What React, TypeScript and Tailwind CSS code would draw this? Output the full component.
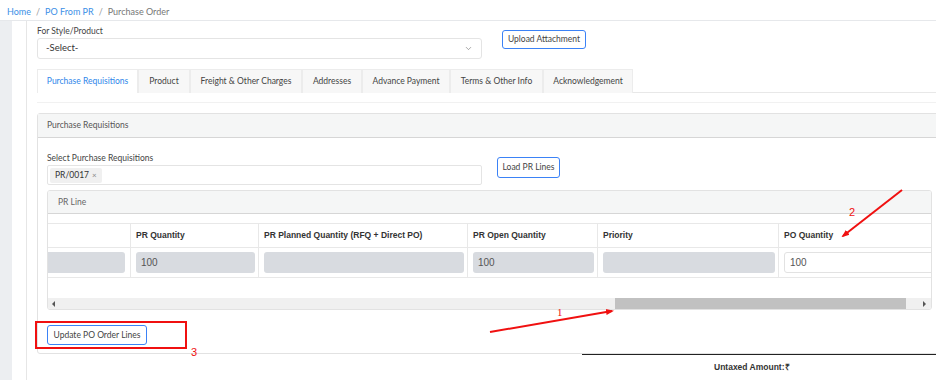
import { ChevronDown } from "lucide-react";

const tabs = [
  { label: "Purchase Requisitions", w: "w-[101px]", active: true },
  { label: "Product", w: "w-[52px]" },
  { label: "Freight & Other Charges", w: "w-[112px]" },
  { label: "Addresses", w: "w-[60px]" },
  { label: "Advance Payment", w: "w-[88px]" },
  { label: "Terms & Other Info", w: "w-[93px]" },
  { label: "Acknowledgement", w: "w-[90px]" },
];

const columns = [
  { head: "", w: "w-[83px]", value: "", editable: false },
  { head: "PR Quantity", w: "w-[128px]", value: "100", editable: false },
  { head: "PR Planned Quantity (RFQ + Direct PO)", w: "w-[209px]", value: "", editable: false },
  { head: "PR Open Quantity", w: "w-[130px]", value: "100", editable: false },
  { head: "Priority", w: "w-[181px]", value: "", editable: false },
  { head: "PO Quantity", w: "w-[170px]", value: "100", editable: true },
];

const Annotations = () => (
  <svg className="absolute inset-0 pointer-events-none" width="936" height="380">
    <defs>
      <marker id="head" markerWidth="8" markerHeight="8" refX="6" refY="4" orient="auto" markerUnits="userSpaceOnUse">
        <path d="M0 1 L8 4 L0 7 Z" fill="#f01010" />
      </marker>
    </defs>
    <line x1="490" y1="332" x2="612" y2="311" stroke="#f01010" strokeWidth="2" markerEnd="url(#head)" />
    <line x1="902" y1="190" x2="843" y2="236" stroke="#f01010" strokeWidth="2" markerEnd="url(#head)" />
    <rect x="36" y="322" width="150" height="26" fill="none" stroke="#f01010" strokeWidth="2" />
    <text x="557" y="316" fill="#f01010" fontSize="11" fontFamily="'Liberation Serif', serif">1</text>
    <text x="849" y="216" fill="#f01010" fontSize="11" fontFamily="'Liberation Sans', sans-serif">2</text>
    <text x="191" y="356" fill="#f01010" fontSize="11" fontFamily="'Liberation Sans', sans-serif">3</text>
  </svg>
);

export default function App() {
  return (
    <div className="relative w-[936px] h-[380px] overflow-hidden bg-white text-[#333] font-['Lato','Open_Sans',sans-serif]">
      {/* breadcrumb */}
      <div className="h-[21px] border-b border-[#e6e8eb] flex items-start pt-[7px] pl-[7px] text-[9px] leading-[10px] gap-[5px]">
        <span className="text-[#3b8fe6]">Home</span>
        <span className="text-[#999]">/</span>
        <span className="text-[#3b8fe6]">PO From PR</span>
        <span className="text-[#999]">/</span>
        <span className="text-[#777]">Purchase Order</span>
      </div>

      <div className="flex h-[359px]">
        <div className="w-[12px] bg-[#eceef1]" />
        <div className="w-[14px]" />
        <div className="flex-1 border-l border-[#e6e6e6] pl-[10px] pt-[5px] overflow-hidden">
          {/* style/product */}
          <div className="flex items-start">
            <div className="w-[445px]">
              <div className="text-[8.5px] leading-[11px] text-[#444]">For Style/Product</div>
              <div className="mt-[1px] h-[21px] border border-[#e4e4e4] rounded-[3px] flex items-center justify-between pl-[8px] pr-[8px] text-[9.5px] text-[#333]">
                <span>-Select-</span>
                <ChevronDown className="w-[9px] h-[9px] text-[#666]" strokeWidth={1.5} />
              </div>
            </div>
            <button className="ml-[20px] mt-[4px] h-[19px] w-[84px] border border-[#3b82f6] rounded-[3px] text-[8.5px] text-[#444] bg-white">
              Upload Attachment
            </button>
          </div>

          {/* tabs */}
          <div className="mt-[10px] flex w-[920px] border-b border-[#e8e8e8] h-[24px]">
            {tabs.map((t) => (
              <div
                key={t.label}
                className={`${t.w} h-[24px] flex items-center justify-center text-[8.5px] border border-[#ececec] border-b-0 ${
                  t.active ? "bg-white text-[#2f86ea] border-[#e4e4e4]" : "bg-[#f7f7f7] text-[#444]"
                }`}
              >
                {t.label}
              </div>
            ))}
          </div>
          <div className="mt-[9px] h-px w-[920px] bg-[#f1f1f1]" />

          {/* purchase requisitions card */}
          <div className="mt-[10px] w-[920px] border border-[#e2e2e2] rounded-[3px]">
            <div className="h-[24px] bg-[#f5f6f6] border-b border-[#d6d6d6] flex items-center pl-[9px] text-[8.5px] text-[#555]">
              Purchase Requisitions
            </div>
            <div className="pl-[9px] pt-[15px] pb-[8px]">
              <div className="flex items-start">
                <div className="w-[435px]">
                  <div className="text-[8.5px] leading-[11px] text-[#444]">Select Purchase Requisitions</div>
                  <div className="mt-[1px] h-[20px] border border-[#e4e4e4] rounded-[2px] flex items-center pl-[2px]">
                    <span className="h-[15px] px-[5px] bg-[#f0f0f0] rounded-[2px] flex items-center gap-[3px] text-[8.5px] text-[#333]">
                      PR/0017 <span className="text-[#888] text-[8px]">×</span>
                    </span>
                  </div>
                </div>
                <button className="ml-[15px] mt-[4px] h-[21px] w-[63px] border border-[#3b82f6] rounded-[3px] text-[8.5px] text-[#444] bg-white">
                  Load PR Lines
                </button>
              </div>

              {/* PR line card */}
              <div className="mt-[5px] w-[885px] border border-[#e2e2e2] rounded-[3px] overflow-hidden">
                <div className="h-[23px] bg-[#f5f6f6] border-b border-[#d6d6d6] flex items-center pl-[10px] text-[8.5px] text-[#666]">
                  PR Line
                </div>
                <div className="h-[9px]" />
                <div className="flex border-t border-b border-[#e8e8e8] h-[25px] font-['Liberation_Sans',Arial,sans-serif] font-bold text-[8.5px] text-[#333]">
                  {columns.map((c, i) => (
                    <div key={i} className={`${c.w} shrink-0 flex items-center pl-[5px] ${i < columns.length - 1 ? "border-r border-[#e8e8e8]" : ""}`}>
                      {c.head}
                    </div>
                  ))}
                </div>
                <div className="flex border-b border-[#e8e8e8] h-[30px] font-['Liberation_Sans',Arial,sans-serif] text-[10px] text-[#555]">
                  {columns.map((c, i) => (
                    <div
                      key={i}
                      className={`${c.w} shrink-0 flex items-center ${i === 0 ? "pr-[5px]" : "pl-[5px] pr-[3px]"} ${
                        i < columns.length - 1 ? "border-r border-[#e8e8e8]" : ""
                      }`}
                    >
                      <div
                        className={`w-full h-[21px] rounded-[3px] flex items-center pl-[5px] ${
                          c.editable ? "bg-white border border-[#e2e2e2]" : "bg-[#d8dbe0]"
                        } ${i === 0 ? "rounded-l-none" : ""}`}
                      >
                        {c.value}
                      </div>
                    </div>
                  ))}
                </div>
                <div className="h-[20px]" />
                {/* scrollbar */}
                <div className="h-[11px] bg-[#f0f0f0] flex items-center relative">
                  <span className="absolute left-[4px] top-[3px] w-0 h-0 border-y-[3px] border-y-transparent border-r-[3px] border-r-[#555]" />
                  <div className="ml-[567px] w-[291px] h-[11px] bg-[#c1c1c1]" />
                  <span className="absolute right-[5px] top-[3px] w-0 h-0 border-y-[3px] border-y-transparent border-l-[3px] border-l-[#555]" />
                </div>
              </div>

              <button className="mt-[15px] h-[20px] w-[100px] border border-[#3b82f6] rounded-[3px] text-[8.5px] text-[#444] bg-white">
                Update PO Order Lines
              </button>
            </div>
          </div>

          {/* totals */}
          <div className="ml-[545px] w-[400px] border-t-[1.5px] border-[#222] pl-[132px] pt-[7px] text-[8.5px] leading-[11px]">
            <span className="font-['Liberation_Sans',Arial,sans-serif] font-bold text-[#333]">Untaxed Amount:₹</span>
          </div>
        </div>
      </div>

      <Annotations />
    </div>
  );
}
